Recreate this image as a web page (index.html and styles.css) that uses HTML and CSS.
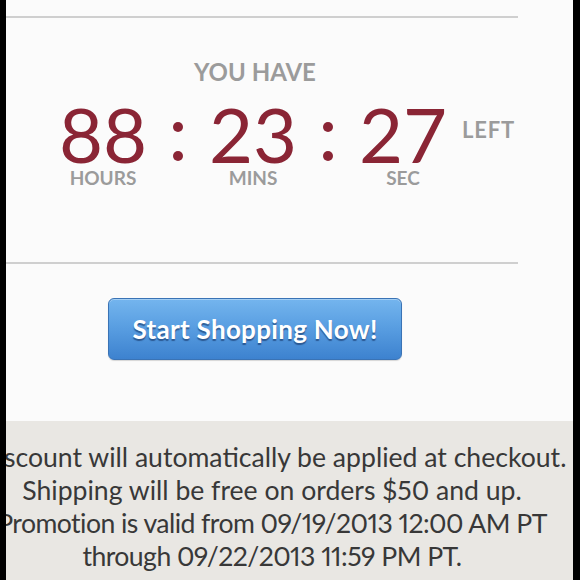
FILE: index.html
```html
<!DOCTYPE html>
<html>
<head>
<meta charset="utf-8">
<link rel="stylesheet" href="styles.css">
</head>
<body>
<div class="frame">
  <section class="countdown">
    <div class="rule"></div>
    <div class="you-have">YOU HAVE</div>
    <div class="timer">
      <div class="num n1">88</div>
      <div class="colon c1"><span class="dot"></span><span class="dot"></span></div>
      <div class="num n2">23</div>
      <div class="colon c2"><span class="dot"></span><span class="dot"></span></div>
      <div class="num n3">27</div>
      <div class="left-word">LEFT</div>
      <div class="unit u1">HOURS</div>
      <div class="unit u2">MINS</div>
      <div class="unit u3">SEC</div>
    </div>
    <div class="rule"></div>
    <div class="cta-wrap">
      <a class="cta" href="#">Start Shopping Now!</a>
    </div>
  </section>
  <section class="terms">
    <p class="line">Discount will automatically be applied at checkout.</p>
    <p class="line">Shipping will be free on orders $50 and up.</p>
    <p class="line dates">Promotion is valid from 09/19/2013 12:00 AM PT</p>
    <p class="line dates">through 09/22/2013 11:59 PM PT.</p>
  </section>
</div>
</body>
</html>
```

FILE: styles.css
```css
html, body {
  margin: 0;
  padding: 0;
  background: #000;
  height: 580px;
  overflow: hidden;
}
.frame {
  margin-left: 6px;
  width: 567px;
  height: 580px;
  background: #fbfbfb;
  display: flex;
  flex-direction: column;
  overflow: hidden;
  font-family: Lato, "Open Sans", sans-serif;
}
.countdown {
  padding-top: 16px;
  height: 421px;
  flex: none;
  box-sizing: border-box;
}
.rule {
  width: 512px;
  height: 2px;
  background: #cfcfcf;
}
.you-have {
  width: 498px;
  text-align: center;
  margin-top: 42px;
  font-size: 24px;
  line-height: 24px;
  font-weight: 700;
  color: #9b9b9b;
}
.timer {
  display: grid;
  grid-template-columns: 100px 50px 100px 50px 100px auto;
  grid-template-rows: 75px auto;
  padding-left: 47px;
  margin-top: 11px;
  height: 167px;
  box-sizing: border-box;
  align-content: start;
}
.num {
  font-size: 76px;
  line-height: 72px;
  padding-top: 3px;
  font-weight: 400;
  color: #8a2535;
  text-align: center;
  grid-row: 1;
}
.n1 { grid-column: 1; }
.n2 { grid-column: 3; }
.n3 { grid-column: 5; }
.colon {
  grid-row: 1;
  display: flex;
  flex-direction: column;
  align-items: center;
  gap: 19px;
  padding-top: 27px;
}
.dot {
  width: 10px;
  height: 10px;
  border-radius: 50%;
  background: #8a2535;
}
.c1 { grid-column: 2; }
.c2 { grid-column: 4; }
.left-word {
  grid-column: 6;
  grid-row: 1;
  padding-left: 9px;
  padding-top: 23px;
  font-size: 22px;
  line-height: 24px;
  letter-spacing: 0.8px;
  font-weight: 700;
  color: #9b9b9b;
}
.unit {
  grid-row: 2;
  text-align: center;
  font-size: 19px;
  line-height: 16px;
  font-weight: 700;
  color: #9b9b9b;
}
.u1 { grid-column: 1; }
.u2 { grid-column: 3; }
.u3 { grid-column: 5; }
.cta-wrap {
  width: 498px;
  display: flex;
  justify-content: center;
  padding-top: 34px;
}
.cta {
  display: flex;
  align-items: center;
  justify-content: center;
  width: 294px;
  height: 62px;
  box-sizing: border-box;
  border: 1px solid #3a73b5;
  border-radius: 6px;
  background: linear-gradient(#74b5ee, #5a9fe2 45%, #3d82cf);
  box-shadow: inset 0 1px 0 rgba(255,255,255,0.35), 0 1px 1px rgba(0,0,0,0.15);
  color: #fff;
  text-decoration: none;
  font-size: 26px;
  letter-spacing: 0.3px;
  font-weight: 700;
  text-shadow: 0 2px 1px rgba(20, 50, 100, 0.6);
}
.terms {
  flex: 1;
  background: #e9e7e3;
  display: flex;
  flex-direction: column;
  align-items: center;
  padding-top: 20px;
  padding-right: 35px;
}
.line {
  margin: 0;
  white-space: nowrap;
  font-size: 26.6px;
  line-height: 33px;
  color: #383838;
  font-variant-numeric: proportional-nums;
}
.dates {
  letter-spacing: -0.55px;
}
```
